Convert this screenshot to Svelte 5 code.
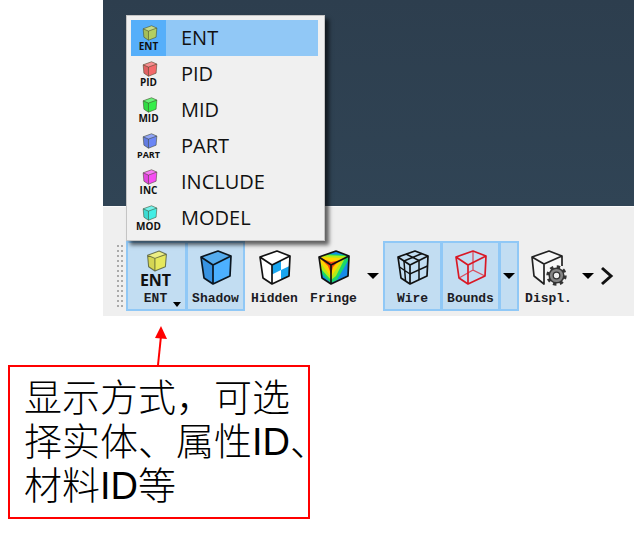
<script>
  const modes = [
    { name: 'ENT', tag: 'ENT', color: '#b4cf62' },
    { name: 'PID', tag: 'PID', color: '#f4696b' },
    { name: 'MID', tag: 'MID', color: '#35ee49' },
    { name: 'PART', tag: 'PART', color: '#6b86f5' },
    { name: 'INCLUDE', tag: 'INC', color: '#f64cf3' },
    { name: 'MODEL', tag: 'MOD', color: '#43eee5' }
  ];
  const lines = ['显示方式，可选', '择实体、属性ID、', '材料ID等'];
  let selected = $state('ENT');
</script>

{#snippet smallCube(color)}
  <svg class="small-cube" viewBox="0 0 20 21" aria-hidden="true">
    <path d="M1 5 12 1 19 4 18 16 8 20 2 16Z" fill={color} />
    <path d="M1 5 12 1 19 4 8 8Z" fill="#fff" fill-opacity=".25" />
    <path d="M1 5 8 8V20L2 16Z" fill="#000" fill-opacity=".08" />
    <path d="M1 5 12 1 19 4 18 16 8 20 2 16ZM1 5 8 8 19 4M8 8V20" fill="none" stroke="#3d4428" stroke-opacity=".7" stroke-width="1" stroke-linejoin="round" />
  </svg>
{/snippet}

{#snippet outline(color)}
  <path d="M1 7 18 1 31 6 30 26 13 34 4 28ZM1 7 13 15 31 6M13 15V34" fill="none" stroke={color} stroke-width="1.7" stroke-linejoin="round" />
{/snippet}

<main>
  <section class="app">
    <div class="viewport"></div>
    <div class="toolbar" role="toolbar" aria-label="Display">
      <span class="grip"></span>
      <div class="group">
        <button class="tool on mode" aria-haspopup="menu">
          <span class="picture">{@render smallCube('#e6e85c')}<b>ENT</b></span>
          <span class="label">ENT</span>
          <svg class="corner" viewBox="0 0 8 5" aria-hidden="true"><path d="M0 0H8L4 5Z" /></svg>
        </button>
        <button class="tool on">
          <svg class="icon" viewBox="0 0 32 36" aria-hidden="true">
            <path d="M1 7 13 15V34L4 28Z" fill="#3793e3" />
            <path d="M1 7 18 1 31 6 13 15Z" fill="#55acee" />
            <path d="M13 15 31 6 30 26 13 34Z" fill="#4cb0ff" />
            {@render outline('#0b1620')}
          </svg>
          <span class="label">Shadow</span>
        </button>
      </div>
      <button class="tool">
        <svg class="icon" viewBox="0 0 32 36" aria-hidden="true">
          <path d="M1 7 18 1 31 6 30 26 13 34 4 28Z" fill="#fff" />
          <path d="M22 10.500 31 6 30.500 16 22 20ZM13 24.500 22 20V30L13 34Z" fill="#fff" />
          <path d="M13 15 22 10.500V20L13 24.500ZM22 20 30.500 16 30 26 22 30Z" fill="#19a6ef" />
          {@render outline('#111')}
        </svg>
        <span class="label">Hidden</span>
      </button>
      <button class="tool">
        <svg class="icon" viewBox="0 0 32 36" aria-hidden="true">
          <path d="M1 7 18 1 31 6 30 26 13 34 4 28Z" fill="#168ce8" />
          <path d="M1 7 9 4 29 5 31 9 19 30 13 33 4 24Z" fill="#19d86a" />
          <path d="M1 7 6 5 28 6 18 26 13 30 3 19Z" fill="#b2eb18" />
          <path d="M1 7 25 8 17 21 13 27 2 12Z" fill="#ffd400" />
          <path d="M2 8 13 12 21 10.500 15 17 13 24 10 16Z" fill="#f2460d" />
          {@render outline('#111')}
        </svg>
        <span class="label">Fringe</span>
      </button>
      <button class="drop" aria-label="Fringe options"><svg viewBox="0 0 12 6" aria-hidden="true"><path d="M0 0H12L6 6Z" /></svg></button>
      <div class="group">
        <button class="tool on">
          <svg class="icon" viewBox="0 0 32 36" aria-hidden="true">
            {@render outline('#111')}
            <path d="M9 4 22 10.500V30M7 11 25 3.500M7 11 8.500 31M2.500 17 13 24 30.500 16" fill="none" stroke="#111" stroke-width="1.500" />
          </svg>
          <span class="label">Wire</span>
        </button>
        <button class="tool on">
          <svg class="icon" viewBox="0 0 32 36" aria-hidden="true">
            <path d="M18 1V20L30 26M18 20 4 28" fill="none" stroke="#d95060" stroke-width="1.300" />
            {@render outline('#d91825')}
          </svg>
          <span class="label">Bounds</span>
        </button>
        <button class="drop on" aria-label="Bounds options"><svg viewBox="0 0 12 6" aria-hidden="true"><path d="M0 0H12L6 6Z" /></svg></button>
      </div>
      <button class="tool">
        <svg class="icon wide" viewBox="0 0 36 36" aria-hidden="true">
          <path d="M1 7 18 1 31 6V26L13 34 3 27Z" fill="#f7f7f7" />
          <path d="M31 16V6L18 1 1 7 3 26 13 34V14L1 7M13 14 31 6" fill="none" stroke="#222" stroke-width="1.700" stroke-linejoin="round" />
          <circle cx="25.500" cy="25.500" r="8.700" fill="none" stroke="#333" stroke-width="3" stroke-dasharray="3.400 3.433" />
          <circle cx="25.500" cy="25.500" r="7.300" fill="#858585" stroke="#333" stroke-width="1.500" />
          <circle cx="25.500" cy="25.500" r="3.300" fill="#eee" stroke="#333" stroke-width="1.300" />
        </svg>
        <span class="label">Displ.</span>
      </button>
      <button class="drop" aria-label="Display options"><svg viewBox="0 0 12 6" aria-hidden="true"><path d="M0 0H12L6 6Z" /></svg></button>
      <button class="more" aria-label="More tools"><svg viewBox="0 0 14 20" aria-hidden="true"><path d="M2 2 11 10 2 18" fill="none" stroke="#111" stroke-width="3" /></svg></button>
    </div>
    <div class="menu" role="menu">
      {#each modes as mode}
        <button class="item" class:selected={selected === mode.name} role="menuitem" onclick={() => (selected = mode.name)}>
          <span class="mark">{@render smallCube(mode.color)}<b class:long={mode.tag.length > 3}>{mode.tag}</b></span>
          <span>{mode.name}</span>
        </button>
      {/each}
    </div>
  </section>
  <svg class="arrow" viewBox="0 0 14 39" aria-hidden="true">
    <path d="M5 39 8 10" stroke="#f00" stroke-width="2" />
    <path d="M8 0 14 13 2 12Z" fill="#f00" />
  </svg>
  <p class="note">
    {#each lines as line}<span>{line}</span>{/each}
  </p>
</main>

<style>
  :global(body) { margin: 0; background: #fff; }
  main { display: flex; flex-direction: column; align-items: flex-start; }
  button { font: inherit; color: inherit; margin: 0; padding: 0; border: 0; background: none; box-sizing: border-box; }
  svg { display: block; flex: none; }
  .app { position: relative; align-self: stretch; margin-left: 103px; }
  .viewport { height: 206px; background: linear-gradient(#2d3e4e, #304455); }
  .toolbar { display: flex; align-items: stretch; padding: 34px 0 5px 14px; border-top: 1px solid #fafafa; background: #efefef; overflow: hidden; }
  .grip { flex: none; width: 6px; margin: 4px 3px 3px 0; background: radial-gradient(circle at 1px 1px, #aaa 1px, transparent 1px) 0 0 / 4px 5px; }
  .group { display: flex; flex: none; }
  .tool { position: relative; flex: none; width: 59px; height: 70px; padding-top: 7px; border: 2px solid transparent; display: flex; flex-direction: column; align-items: center; gap: 6px; }
  .on { border: 2px solid #90c8f6; background: #c2ddf2; }
  .on + .on { margin-left: -1px; }
  .mode { width: 61px; padding-right: 2px; }
  .icon { width: 32px; height: 36px; }
  .icon.wide { width: 36px; }
  .label { font: bold 13px/14px "Liberation Mono", monospace; color: #1b1b24; }
  .picture { display: flex; flex-direction: column; align-items: center; height: 36px; }
  .picture .small-cube { width: 22px; height: 22px; margin-left: 4px; }
  .picture b { font: bold 16px/16px "Open Sans", sans-serif; color: #111; }
  .corner { position: absolute; right: 4px; bottom: 2px; width: 8px; height: 5px; }
  .drop { flex: none; width: 20px; display: flex; align-items: center; justify-content: center; }
  .drop svg { width: 12px; height: 6px; }
  .more { display: flex; align-items: center; margin-left: 2px; }
  .more svg { width: 14px; height: 20px; }
  .menu { position: absolute; left: 23px; top: 15px; width: 199px; box-sizing: border-box; padding: 4px 6px 4px 4px; border: 1px solid #c4c4c4; background: #f0f0f0; box-shadow: 4px 4px 4px rgba(0, 0, 0, .6); }
  .item { display: flex; align-items: center; gap: 15px; width: 100%; height: 36px; font: 20px/28px "Open Sans", sans-serif; color: #111; text-align: left; }
  .selected { background: #91c8f6; }
  .mark { display: flex; flex-direction: column; align-items: center; justify-content: center; width: 35px; height: 36px; }
  .selected .mark { background: #56affa; }
  .mark .small-cube { width: 16px; height: 16px; margin-left: 2px; }
  .mark b { font: bold 10px/11px "Open Sans", sans-serif; }
  .mark .long { font-size: 9px; }
  .arrow { width: 14px; height: 39px; margin: 10px 0 0 153px; }
  .note { margin: 0 0 14px 8px; width: 302px; box-sizing: border-box; padding: 9px 14px; border: 2px solid #f00; font: 300 38px/44px "Liberation Sans", "Noto Sans CJK SC", sans-serif; color: #000; }
  .note span { display: block; white-space: nowrap; }
</style>
